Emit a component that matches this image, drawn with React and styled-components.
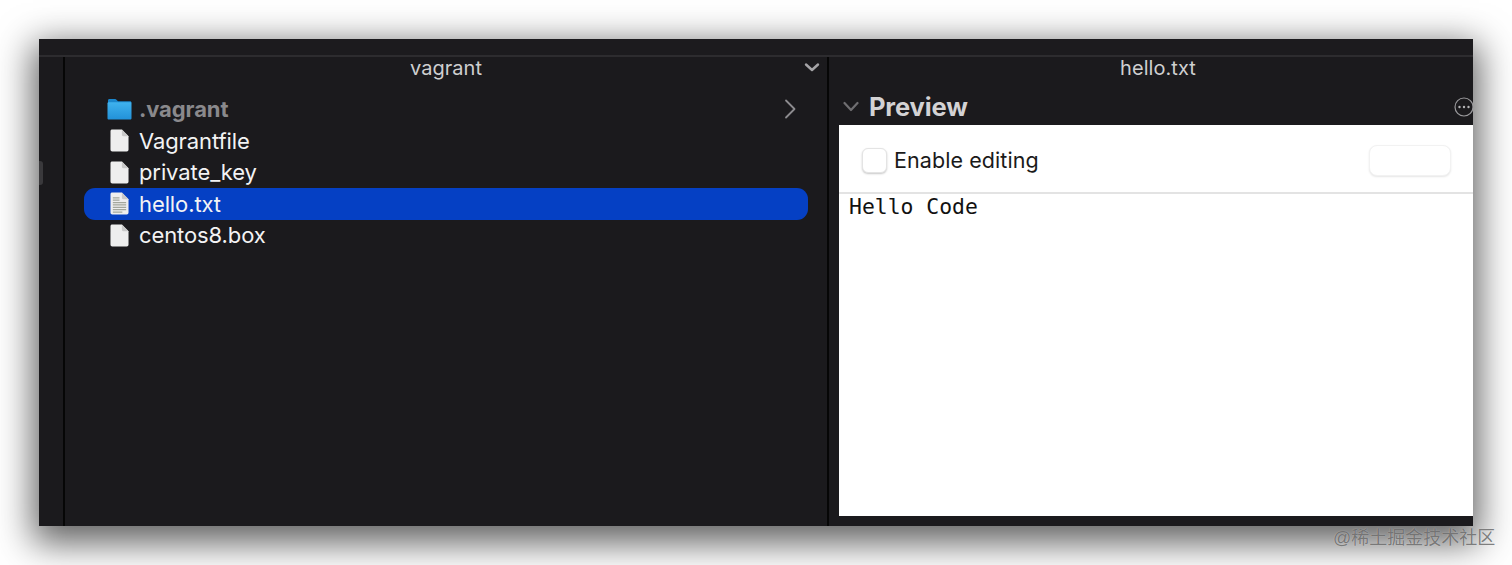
import * as React from 'react'
import styled, { createGlobalStyle } from 'styled-components'

const GlobalStyle = createGlobalStyle`
  html, body {
    margin: 0;
    padding: 0;
    background: #fff;
    overflow: hidden;
  }
`

const Page = styled.div`
  position: relative;
  width: 1512px;
  height: 565px;
  padding: 39px;
  box-sizing: border-box;
  background: #fff;
  font-family: Inter, 'Liberation Sans', sans-serif;
`

const WindowShadow = styled.div`
  position: absolute;
  left: 39px;
  top: 39px;
  width: 1434px;
  height: 487px;
  box-shadow: 0 11px 34px 6px rgba(0, 0, 0, 0.62);
`

const Window = styled.div`
  position: relative;
  width: 1434px;
  height: 487px;
  display: flex;
  flex-direction: column;
  overflow: hidden;
  background: #1b1a1d;
`

const TopBar = styled.div`
  height: 16px;
  flex: none;
  background: #1c1b1e;
  border-bottom: 2px solid #2d2c2f;
`

const Body = styled.div`
  flex: 1;
  display: flex;
  min-height: 0;
`

const Rail = styled.div`
  position: relative;
  width: 24px;
  flex: none;
  border-right: 2px solid #060606;
`

const RailHandle = styled.div`
  position: absolute;
  left: 0;
  top: 104px;
  width: 4px;
  height: 24px;
  border-radius: 0 3px 3px 0;
  background: #3a393c;
`

const FinderColumn = styled.div`
  width: 762px;
  flex: none;
  display: flex;
  flex-direction: column;
  border-right: 2px solid #060606;
`

const ColumnTitle = styled.div`
  height: 21px;
  flex: none;
  display: flex;
  align-items: center;
  justify-content: center;
  position: relative;
  padding-left: ${p => p.$shift || 0}px;
  font-size: 20px;
  letter-spacing: 0.05px;
  color: #cfcfd0;
`

const TitleChevron = styled.svg`
  position: absolute;
  right: 7px;
  top: 5px;
`

const FileList = styled.div`
  display: flex;
  flex-direction: column;
  margin-top: 15.7px;
  padding: 0 19px;
`

const Row = styled.div`
  height: 31.5px;
  display: flex;
  align-items: center;
  border-radius: 11px;
  padding-left: 23px;
  background: ${p => (p.$selected ? '#0540c4' : 'transparent')};
  color: ${p => (p.$dim ? '#8a898c' : '#f3f3f4')};
  font-weight: ${p => (p.$dim ? 700 : 400)};
  font-size: 22px;
  letter-spacing: -0.1px;
`

const IconSlot = styled.div`
  width: 32px;
  flex: none;
  display: flex;
  align-items: center;
  justify-content: ${p => (p.$folder ? 'flex-start' : 'center')};
  padding-right: ${p => (p.$folder ? 0 : 7)}px;
  box-sizing: border-box;
`

const RowName = styled.span`
  flex: 1;
`

const RowChevron = styled.svg`
  margin-right: 12px;
`

const PreviewColumn = styled.div`
  flex: 1;
  min-width: 0;
  display: flex;
  flex-direction: column;
  padding-left: 10px;
  padding-bottom: 10px;
`

const PreviewHeader = styled.div`
  height: 47px;
  flex: none;
  box-sizing: border-box;
  display: flex;
  align-items: center;
  margin-left: -10px;
  padding: 10px 0 0 14px;
  position: relative;
`

const HeaderChevron = styled.svg`
  margin-right: 10px;
`

const PreviewLabel = styled.span`
  font-size: 25.5px;
  font-weight: 700;
  color: #d3d2d4;
  letter-spacing: -0.15px;
`

const MoreIcon = styled.svg`
  position: absolute;
  right: -1px;
  top: 19px;
`

const Sheet = styled.div`
  flex: 1;
  display: flex;
  flex-direction: column;
  background: #fff;
`

const SheetBar = styled.div`
  height: 69px;
  flex: none;
  box-sizing: border-box;
  display: flex;
  align-items: center;
  padding: 3px 22px 0 23px;
  border-bottom: 2px solid #e3e3e3;
`

const CheckBox = styled.div`
  width: 25px;
  height: 25px;
  flex: none;
  box-sizing: border-box;
  margin-right: 7px;
  border-radius: 6px;
  background: #fff;
  border: 1px solid #e4e4e4;
  box-shadow: 0 1px 2px rgba(0, 0, 0, 0.22);
`

const CheckLabel = styled.span`
  flex: 1;
  font-size: 21.5px;
  letter-spacing: 0.08px;
  color: #1a1a1a;
`

const BlankButton = styled.div`
  width: 82px;
  height: 31px;
  border-radius: 8px;
  border: 1px solid #f2f2f2;
  box-sizing: border-box;
  background: #fff;
  box-shadow: 0 1px 2px rgba(0, 0, 0, 0.1);
`

const TextArea = styled.div`
  padding: 0 10px;
  font-family: 'DejaVu Sans Mono', 'Liberation Mono', monospace;
  font-size: 21.4px;
  line-height: 26px;
  color: #111;
`

const Watermark = styled.div`
  position: absolute;
  left: 1333px;
  top: 525px;
  font-family: 'Liberation Sans', 'Noto Sans CJK SC', sans-serif;
  font-size: 18px;
  line-height: 26px;
  color: rgba(95, 95, 95, 0.8);
  text-shadow: 0 0 1px rgba(255, 255, 255, 0.5);
  white-space: nowrap;
`

const FolderIcon = () => (
  <svg width="25" height="22" viewBox="0 0 25 22">
    <defs>
      <linearGradient id="folderBody" x1="0" y1="0" x2="0" y2="1">
        <stop offset="0" stopColor="#3fb2ee" />
        <stop offset="1" stopColor="#2291d8" />
      </linearGradient>
    </defs>
    <path d="M1 4.5V2.5C1 1.5 1.6 1 2.5 1H8c.8 0 1.2.3 1.7.9L11 3.2h12c.9 0 1.5.6 1.5 1.5V5H1z" fill="#1a86cc" />
    <path d="M.5 5.5C.5 4.7 1 4.3 1.8 4.3h21.4c.8 0 1.3.4 1.3 1.2v14.8c0 .8-.5 1.2-1.3 1.2H1.8c-.8 0-1.3-.4-1.3-1.2z" fill="url(#folderBody)" />
  </svg>
)

const FileIcon = ({ lines }) => (
  <svg width="19" height="23" viewBox="0 0 20 24">
    <path d="M2.5.5H12.5L19.5 7.5V21.5C19.5 22.8 18.8 23.5 17.5 23.5H2.5C1.2 23.5.5 22.8.5 21.5V2.5C.5 1.2 1.2.5 2.5.5Z" fill="#eeeeee" />
    <path d="M12.5.5V6C12.5 7 13 7.5 14 7.5H19.5Z" fill="#c9c9c9" />
    {lines && (
      <path d="M3 6h7M3 8.5h7M3 11h14M3 13.5h14M3 16h14M3 18.5h14M3 21h10" stroke="#a3a79c" strokeWidth="1.3" />
    )}
  </svg>
)

const files = [
  { name: '.vagrant', folder: true },
  { name: 'Vagrantfile' },
  { name: 'private_key' },
  { name: 'hello.txt', selected: true },
  { name: 'centos8.box' },
]

export default function App() {
  return (
    <Page>
      <GlobalStyle />
      <WindowShadow />
      <Window>
        <TopBar />
        <Body>
          <Rail>
            <RailHandle />
          </Rail>
          <FinderColumn>
            <ColumnTitle>
              vagrant
              <TitleChevron width="16" height="11" viewBox="0 0 16 11">
                <path d="M2 2.5L8 8L14 2.5" fill="none" stroke="#a5a4a7" strokeWidth="2.4" strokeLinecap="round" strokeLinejoin="round" />
              </TitleChevron>
            </ColumnTitle>
            <FileList>
              {files.map(f => (
                <Row key={f.name} $selected={f.selected} $dim={f.folder}>
                  <IconSlot $folder={f.folder}>
                    {f.folder ? <FolderIcon /> : <FileIcon lines={f.selected} />}
                  </IconSlot>
                  <RowName>{f.name}</RowName>
                  {f.folder && (
                    <RowChevron width="12" height="20" viewBox="0 0 12 20">
                      <path d="M2 1.5L10.5 10L2 18.5" fill="none" stroke="#8d8c8f" strokeWidth="1.8" strokeLinecap="round" strokeLinejoin="round" />
                    </RowChevron>
                  )}
                </Row>
              ))}
            </FileList>
          </FinderColumn>
          <PreviewColumn>
            <ColumnTitle $shift={4}>hello.txt</ColumnTitle>
            <PreviewHeader>
              <HeaderChevron width="16" height="11" viewBox="0 0 16 11">
                <path d="M1.5 2L8 9L14.5 2" fill="none" stroke="#6f6e71" strokeWidth="2.2" strokeLinecap="round" strokeLinejoin="round" />
              </HeaderChevron>
              <PreviewLabel>Preview</PreviewLabel>
              <MoreIcon width="20" height="20" viewBox="0 0 20 20">
                <circle cx="10" cy="10" r="9" fill="none" stroke="#9a999c" strokeWidth="1.2" />
                <circle cx="5.5" cy="10" r="1.2" fill="#b5b4b7" />
                <circle cx="10" cy="10" r="1.2" fill="#b5b4b7" />
                <circle cx="14.5" cy="10" r="1.2" fill="#b5b4b7" />
              </MoreIcon>
            </PreviewHeader>
            <Sheet>
              <SheetBar>
                <CheckBox />
                <CheckLabel>Enable editing</CheckLabel>
                <BlankButton />
              </SheetBar>
              <TextArea>Hello Code</TextArea>
            </Sheet>
          </PreviewColumn>
        </Body>
      </Window>
      <Watermark>@稀土掘金技术社区</Watermark>
    </Page>
  )
}
